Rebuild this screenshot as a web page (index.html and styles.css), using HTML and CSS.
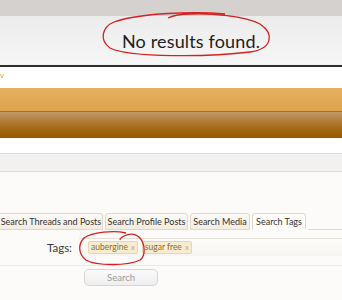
FILE: index.html
```html
<!DOCTYPE html>
<html>
<head>
<meta charset="utf-8">
<link rel="stylesheet" href="styles.css">
</head>
<body>
<div class="page">
  <div class="topbar"></div>
  <div class="notice">
    <span class="notice-text">No results found.</span>
    <svg class="ring ring-notice" viewBox="0 0 174 48" width="174" height="48"><path d="M125 4 C 95 1, 40 3, 14 12 C 2 17, -1 30, 10 38 C 30 48, 110 47, 150 42 C 172 39, 175 24, 160 14 C 145 6, 110 3, 90 4 C 80 4, 72 6, 68 8" fill="none" stroke="#d42020" stroke-width="1.3"/></svg>
  </div>
  <div class="gap"><span class="crumb">v</span></div>
  <div class="nav">
    <div class="nav-top"></div>
    <div class="nav-bottom"></div>
  </div>
  <div class="gap2"></div>
  <div class="subbar"></div>
  <div class="content">
    <div class="tabs">
      <div class="tab t1">Search Threads and Posts</div>
      <div class="tab t2">Search Profile Posts</div>
      <div class="tab t3">Search Media</div>
      <div class="tab t4 active">Search Tags</div>
      <div class="tab-fill"></div>
    </div>
    <div class="row">
      <label class="label">Tags:</label>
      <div class="input">
        <span class="token">aubergine <span class="x">x</span></span>
        <span class="token">sugar free <span class="x">x</span></span>
        <svg class="ring ring-tag" viewBox="0 0 68 36" width="68" height="36"><path d="M48 3 C 36 0, 14 2, 6 8 C 0 14, 0 24, 8 30 C 18 36, 50 36, 62 30 C 68 26, 67 14, 62 8 C 58 4, 52 3, 46 6 C 44 7, 42 9, 42 10" fill="none" stroke="#d42020" stroke-width="1.3"/></svg>
      </div>
    </div>
    <div class="submit-row">
      <button class="btn">Search</button>
    </div>
  </div>
</div>
</body>
</html>
```
FILE: styles.css
```css
html, body { margin: 0; padding: 0; }
body { background: #fdfbf9; font-family: Lato, "Open Sans", sans-serif; overflow: hidden; }
.page { width: 342px; height: 300px; position: relative; overflow: hidden; }
.topbar { height: 16px; background: #d4d1ce; }
.notice {
  position: relative;
  height: 49px;
  background: linear-gradient(#ececec, #f6f6f6);
  border-bottom: 2px solid #2e2e2e;
  display: flex;
  align-items: center;
  padding-left: 122px;
}
.notice-text { font-size: 18px; color: #1e1e1e; letter-spacing: 0.15px; }
.ring { position: absolute; }
.ring-notice { left: 100px; top: -6px; }
.gap { height: 21px; background: #fff; position: relative; }
.crumb { position: absolute; left: 0; top: 4px; color: #e39a2c; font-size: 8px; line-height: 8px; }
.nav-top { height: 23px; background: linear-gradient(#e6b060, #dea24c); border-bottom: 1px solid #9c7428; }
.nav-bottom { height: 26px; background: linear-gradient(#c09a6a, #a86e1c 55%, #965800); }
.gap2 { height: 15px; background: #fff; }
.subbar { height: 17px; background: #f2f1ef; border-top: 1px solid #e6ddc6; border-bottom: 1px solid #e6ddc6; }
.content { padding-top: 41px; }
.tabs { display: flex; align-items: flex-end; gap: 2px; font-size: 9px; color: #333; }
.tab {
  height: 15px;
  line-height: 15px;
  text-align: center;
  background: linear-gradient(#fdfaf6, #f5ece0);
  border: 1px solid #e3d8c6;
  border-radius: 3px 3px 0 0;
  white-space: nowrap;
  box-sizing: content-box;
}
.t1 { width: 102px; border-left: none; border-radius: 0 3px 0 0; }
.t2 { width: 81px; }
.t3 { width: 58px; }
.t4 { width: 52px; }
.tab.active { background: #fffdfb; border-bottom-color: #fffdfb; }
.tab-fill { flex: 1; border-bottom: 1px solid #e3d8c6; height: 0; }
.row { display: flex; align-items: center; margin-top: 8px; }
.label { width: 79px; text-align: right; font-size: 11.5px; color: #3a3a3a; padding-right: 7px; box-sizing: border-box; }
.input {
  position: relative;
  flex: 1;
  height: 17px;
  border-top: 1px solid #e5e0d8;
  background: linear-gradient(#fdfcfa, #f7f5f1);
  display: flex;
  align-items: center;
  gap: 4px;
  padding-left: 9px;
}
.token {
  font-size: 8.5px;
  color: #8f6b2e;
  background: #f7ecd0;
  border: 1px solid #e6d6ae;
  border-radius: 2px;
  padding: 0 2px;
  line-height: 10px;
}
.x { color: #c0a878; font-size: 7.5px; margin-left: 1px; }
.ring-tag { left: -1px; top: -9px; }
.submit-row { border-top: 1px solid #ece8e2; margin-top: 9px; padding: 3px 0 0 84px; }
.btn {
  display: block;
  width: 74px;
  height: 17px;
  border: 1px solid #d8d6d2;
  border-radius: 5px;
  background: linear-gradient(#fbfbfb, #eeeeee);
  color: #9c9c9c;
  font-family: Lato, sans-serif;
  font-size: 9.5px;
  padding: 0;
}
```
